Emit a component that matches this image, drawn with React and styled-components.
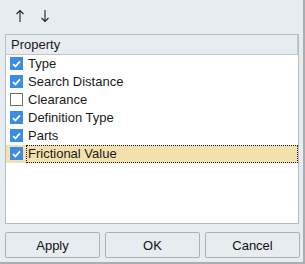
import React, { useState } from "react";
import styled, { createGlobalStyle } from "styled-components";

const Global = createGlobalStyle`
  html, body { margin: 0; padding: 0; background: #ffffff; }
  body { font-family: "Liberation Sans", Arial, sans-serif; }
  * { box-sizing: border-box; }
`;

const Window = styled.div`
  width: 305px;
  height: 264px;
  background: #e6ecf0;
  border-right: 2px solid #a9aeb3;
  border-bottom: 2px solid #a9aeb3;
  display: flex;
  flex-direction: column;
  padding: 0 4px 4px 5px;
`;

const Toolbar = styled.div`
  height: 34px;
  display: flex;
  align-items: center;
  gap: 11px;
  padding: 0 0 2px 8px;
`;

const ToolButton = styled.button`
  width: 14px;
  height: 18px;
  padding: 0;
  border: none;
  background: transparent;
  display: flex;
  align-items: center;
  justify-content: center;
  color: #222;
`;

const List = styled.div`
  height: 191px;
  border: 1px solid #b7bcc0;
  background: #ffffff;
  display: flex;
  flex-direction: column;
`;

const Header = styled.div`
  height: 20px;
  background: #e6ecf0;
  border-bottom: 1px solid #c3c8cc;
  border-right: 1px solid #c3c8cc;
  display: flex;
  align-items: center;
  padding-left: 5px;
  font-size: 13px;
  color: #1a1a1a;
`;

const Row = styled.div`
  height: 18px;
  display: flex;
  align-items: center;
  padding-left: 4px;
  background: ${(p) => (p.$selected ? "#f5e1ae" : "transparent")};
`;

const Box = styled.span`
  width: 13px;
  height: 13px;
  flex: none;
  display: flex;
  align-items: center;
  justify-content: center;
  background: ${(p) => (p.$checked ? "#3b8ce6" : "#ffffff")};
  border: 1px solid ${(p) => (p.$checked ? "#3b8ce6" : "#6e6e6e")};
`;

const Label = styled.span`
  flex: 1;
  height: 18px;
  margin-left: 3px;
  padding-left: 1px;
  display: flex;
  align-items: center;
  font-size: 13px;
  color: #1a1a1a;
  white-space: nowrap;
  border: 1px dotted ${(p) => (p.$selected ? "#1a1a1a" : "transparent")};
`;

const Buttons = styled.div`
  display: grid;
  grid-template-columns: repeat(3, 95px);
  gap: 5px;
  margin-top: 8px;
`;

const Button = styled.button`
  height: 26px;
  border: 1px solid #adb2b6;
  border-radius: 2px;
  background: #e6ecf0;
  font-family: "Liberation Sans", Arial, sans-serif;
  font-size: 13px;
  color: #111;
  padding: 0;
`;

const UpArrow = () => (
  <svg width="10" height="14" viewBox="0 0 10 14">
    <path d="M5 1.5V13M1.5 5L5 1.5L8.5 5" fill="none" stroke="#222" strokeWidth="1.1" />
  </svg>
);

const DownArrow = () => (
  <svg width="10" height="14" viewBox="0 0 10 14">
    <path d="M5 1V12.5M1.5 9L5 12.5L8.5 9" fill="none" stroke="#222" strokeWidth="1.1" />
  </svg>
);

const Check = () => (
  <svg width="9" height="8" viewBox="0 0 9 8">
    <path d="M1 4.2L3.4 6.4L8 1.4" fill="none" stroke="#fff" strokeWidth="1.8" />
  </svg>
);

const initial = [
  { name: "Type", checked: true },
  { name: "Search Distance", checked: true },
  { name: "Clearance", checked: false },
  { name: "Definition Type", checked: true },
  { name: "Parts", checked: true },
  { name: "Frictional Value", checked: true },
];

export default function App() {
  const [items] = useState(initial);
  const selected = 5;
  return (
    <>
      <Global />
      <Window>
        <Toolbar>
          <ToolButton><UpArrow /></ToolButton>
          <ToolButton><DownArrow /></ToolButton>
        </Toolbar>
        <List>
          <Header>Property</Header>
          {items.map((it, i) => (
            <Row key={it.name} $selected={i === selected}>
              <Box $checked={it.checked}>{it.checked && <Check />}</Box>
              <Label $selected={i === selected}>{it.name}</Label>
            </Row>
          ))}
        </List>
        <Buttons>
          <Button>Apply</Button>
          <Button>OK</Button>
          <Button>Cancel</Button>
        </Buttons>
      </Window>
    </>
  );
}
